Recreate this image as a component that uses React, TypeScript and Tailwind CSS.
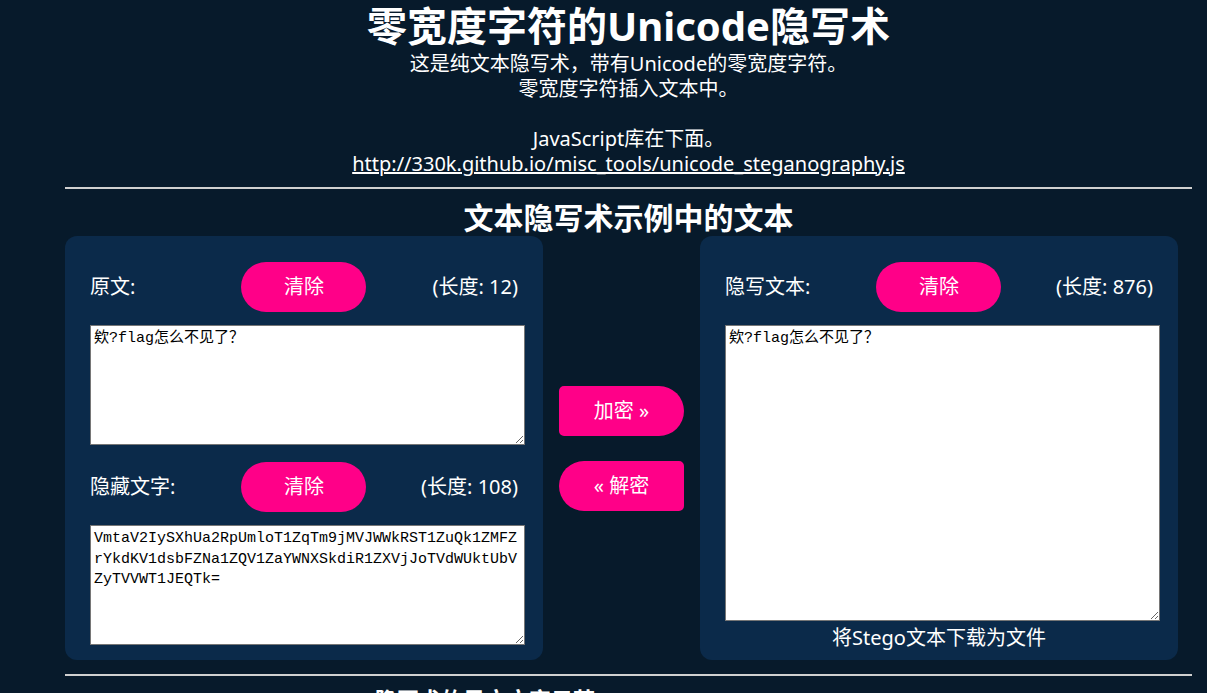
const hidden =
  "VmtaV2IySXhUa2RpUmloT1ZqTm9jMVJWWkRST1ZuQk1ZMFZrYkdKV1dsbFZNa1ZQV1ZaYWNXSkdiR1ZXVjJoTVdWUktUbVZyTVVWT1JEQTk=";
const original = "欸?flag怎么不见了？";

const font = "font-['Noto_Sans','Noto_Sans_CJK_SC',sans-serif]";
const mono =
  "font-['Liberation_Mono','Noto_Sans_CJK_SC',monospace] text-[15px] leading-[20.5px]";

function ClearButton() {
  return (
    <button className="h-[50px] w-[125px] rounded-full bg-[#ff0088] text-[20px] text-white">
      清除
    </button>
  );
}

// label | clear button | length, button sits in the middle column
function LabelRow({ label, length }: { label: string; length: number }) {
  return (
    <div className="grid grid-cols-3 items-center text-[20px] text-white">
      <span className="justify-self-start">{label}</span>
      <span className="justify-self-center">
        <ClearButton />
      </span>
      <span className="justify-self-end">(长度: {length})</span>
    </div>
  );
}

function Box({ value, height }: { value: string; height: string }) {
  return (
    <textarea
      readOnly
      value={value}
      className={`block w-[435px] ${height} resize-y border border-[#767676] bg-white px-[3px] py-[3px] text-black outline-none ${mono}`}
    />
  );
}

export default function App() {
  return (
    <div className={`min-h-[693px] w-full overflow-hidden bg-[#071a2b] text-white ${font}`}>
      <div className="ml-[65px] w-[1127px]">
        <header className="text-center">
          <h1 className="pt-[1px] text-[40px] font-bold leading-[50px]">零宽度字符的Unicode隐写术</h1>
          <div className="text-[20px] leading-[25px]">
            <p>这是纯文本隐写术，带有Unicode的零宽度字符。</p>
            <p>零宽度字符插入文本中。</p>
            <p>&nbsp;</p>
            <p>JavaScript库在下面。</p>
            <p>
              <a href="#" className="underline">
                http://330k.github.io/misc_tools/unicode_steganography.js
              </a>
            </p>
          </div>
        </header>

        <hr className="mt-[11px] border-t-2 border-[#d0d0d0]" />

        <h2 className="mt-[11px] text-center text-[30px] font-bold leading-[36px]">
          文本隐写术示例中的文本
        </h2>

        <div className="flex items-center">
          <section className="flex h-[424px] w-[478px] flex-col rounded-xl bg-[#0b2a4a] pl-[25px] pr-[25px] pt-[26px]">
            <LabelRow label="原文:" length={12} />
            <div className="mt-[13px]">
              <Box value={original} height="h-[120px]" />
            </div>
            <div className="mt-[17px]">
              <LabelRow label="隐藏文字:" length={108} />
            </div>
            <div className="mt-[13px]">
              <Box value={hidden} height="h-[120px]" />
            </div>
          </section>

          <div className="flex w-[157px] flex-col items-center gap-[25px]">
            <button className="h-[50px] w-[125px] rounded-l-[5px] rounded-r-[25px] bg-[#ff0088] text-[20px] text-white">
              加密 »
            </button>
            <button className="h-[50px] w-[125px] rounded-l-[25px] rounded-r-[5px] bg-[#ff0088] text-[20px] text-white">
              « 解密
            </button>
          </div>

          <section className="flex h-[424px] w-[478px] flex-col rounded-xl bg-[#0b2a4a] pl-[25px] pr-[25px] pt-[26px]">
            <LabelRow label="隐写文本:" length={876} />
            <div className="mt-[13px]">
              <Box value={original} height="h-[296px]" />
            </div>
            <a href="#" className="mt-[4px] text-center text-[20px] leading-[25px] text-white">
              将Stego文本下载为文件
            </a>
          </section>
        </div>

        <hr className="mt-[14px] border-t-2 border-[#d0d0d0]" />

        <h2 className="mt-[9px] pl-[310px] text-[22px] font-bold leading-[28px]">隐写术的日文文字示范</h2>
      </div>
    </div>
  );
}
